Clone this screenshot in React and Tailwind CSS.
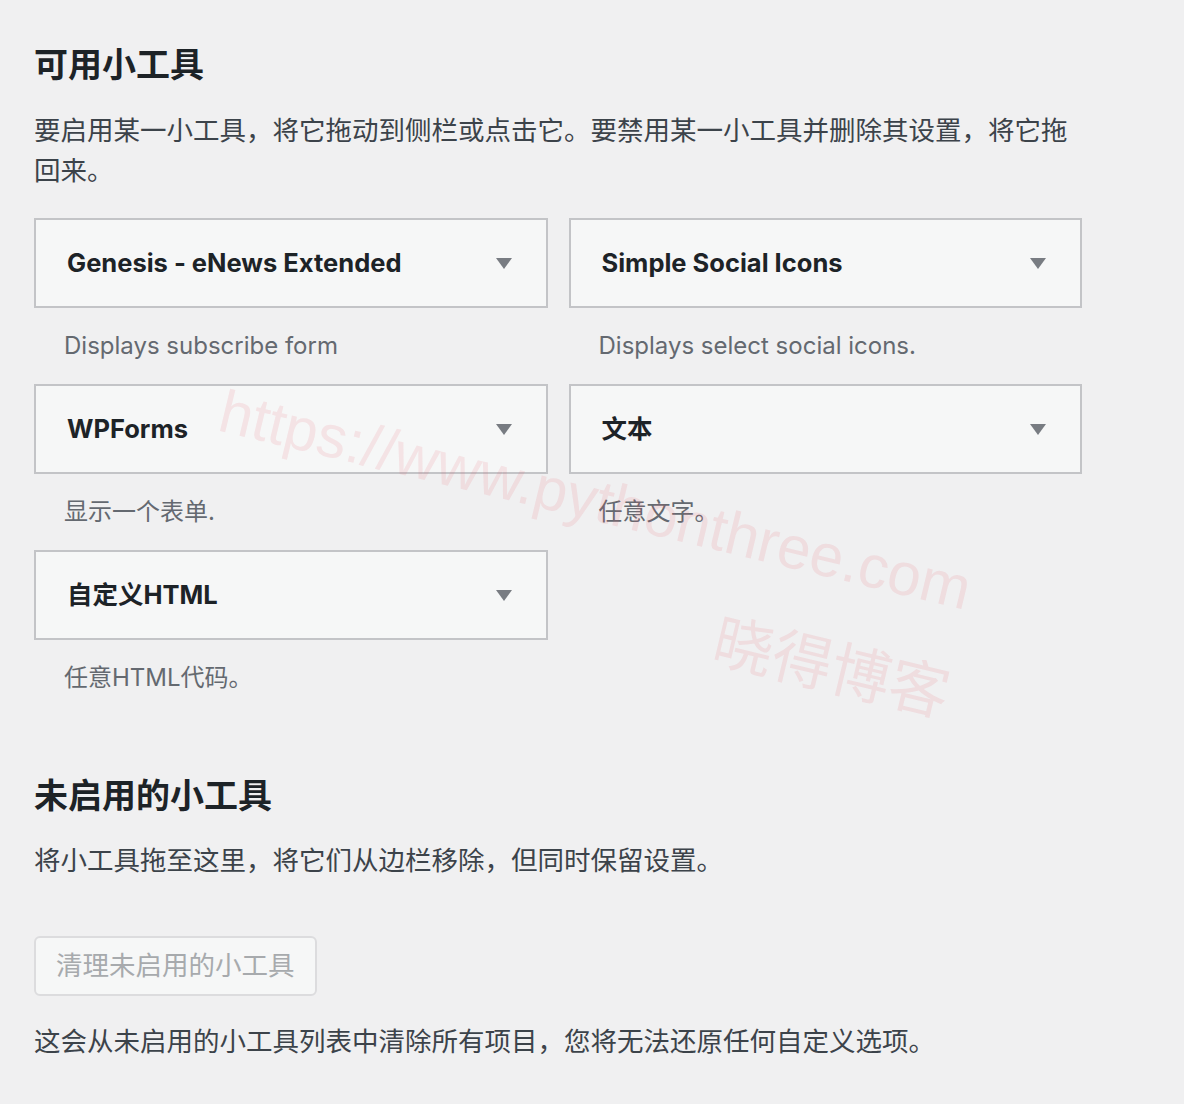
import React from "react";

const FONT = {
  fontFamily: '"Inter", "Noto Sans CJK SC", sans-serif',
};

const widgets = [
  { title: "Genesis - eNews Extended", desc: "Displays subscribe form" },
  { title: "Simple Social Icons", desc: "Displays select social icons." },
  { title: "WPForms", desc: "显示一个表单." },
  { title: "文本", desc: "任意文字。" },
  { title: "自定义HTML", desc: "任意HTML代码。" },
];

const Arrow = () => (
  <svg width="16" height="11" viewBox="0 0 16 11" className="shrink-0">
    <path d="M0 0h16L8 11z" fill="#787c82" />
  </svg>
);

const WidgetCard = ({ title, desc }) => (
  <div className="h-[166px]">
    <div className="h-[90px] border-2 border-[#c3c4c7] bg-[#f6f7f7] flex items-center justify-between pl-[31px] pr-[34px]">
      <h3 className="text-[25.5px] font-bold text-[#1d2327] leading-none">
        {title}
      </h3>
      <Arrow />
    </div>
    <p className="pt-[18px] pl-[30px] text-[24px] leading-[39px] text-[#646970]">
      {desc}
    </p>
  </div>
);

export default function App() {
  return (
    <div
      className="relative min-h-[1104px] bg-[#f0f0f1] overflow-hidden"
      style={FONT}
    >
      <div className="pl-[34px] w-[1082px]">
        <h2 className="pt-[43px] text-[34px] leading-[44px] font-bold text-[#1d2327]">
          可用小工具
        </h2>
        <p className="mt-[23px] text-[26.5px] leading-[40px] text-[#3c434a]">
          要启用某一小工具，将它拖动到侧栏或点击它。要禁用某一小工具并删除其设置，将它拖回来。
        </p>
        <div className="mt-[28px] grid grid-cols-2 gap-x-[21px]">
          {widgets.map((w) => (
            <WidgetCard key={w.title} {...w} />
          ))}
        </div>

        <h2 className="mt-[58px] text-[34px] leading-[44px] font-bold text-[#1d2327]">
          未启用的小工具
        </h2>
        <p className="mt-[22px] text-[26.5px] leading-[40px] text-[#3c434a]">
          将小工具拖至这里，将它们从边栏移除，但同时保留设置。
        </p>
        <button className="mt-[56px] h-[60px] px-[20px] border-2 border-[#dcdcde] rounded-[6px] bg-[#f6f7f7] text-[26.5px] text-[#a7aaad]">
          清理未启用的小工具
        </button>
        <p className="mt-[25px] text-[26.5px] leading-[40px] text-[#3c434a]">
          这会从未启用的小工具列表中清除所有项目，您将无法还原任何自定义选项。
        </p>
      </div>

      {/* watermark */}
      <div className="pointer-events-none absolute left-[216px] top-[380px] origin-[0_50px] rotate-[13.5deg] font-['Liberation_Sans',sans-serif] text-[60px] leading-none text-[rgba(232,90,110,0.13)] whitespace-nowrap">
        https://www.pythonthree.com
      </div>
      <div className="pointer-events-none absolute left-[722px] top-[610px] origin-top-left rotate-[13.5deg] text-[60px] leading-none text-[rgba(232,90,110,0.13)] whitespace-nowrap">
        晓得博客
      </div>
    </div>
  );
}
